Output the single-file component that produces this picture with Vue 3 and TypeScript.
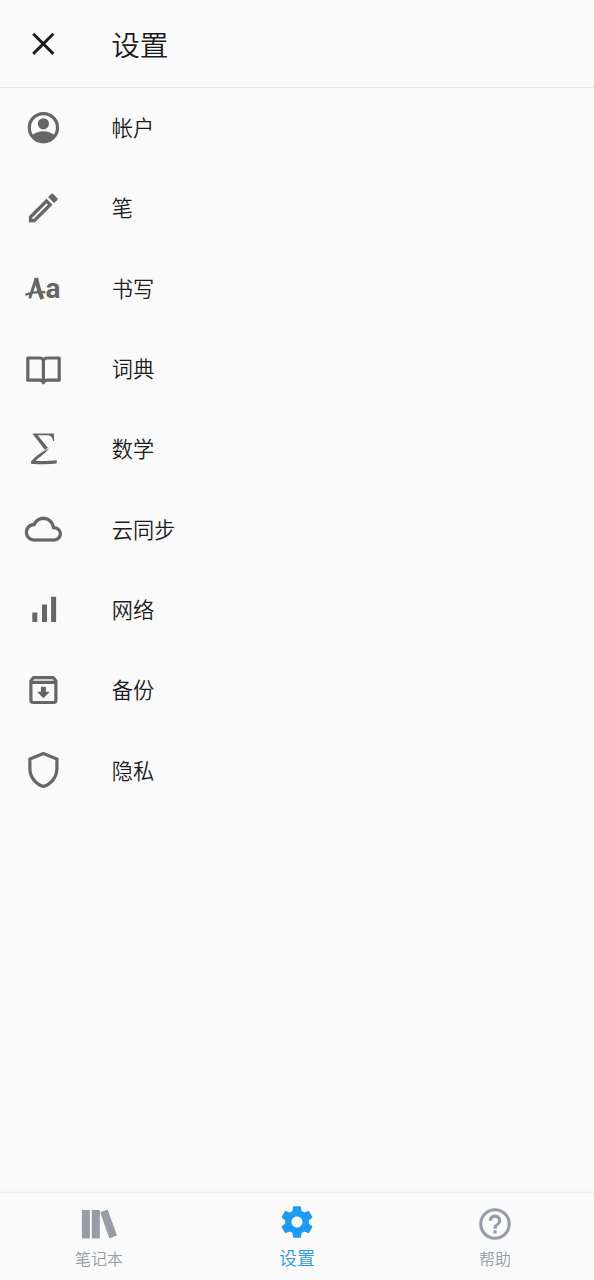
<script setup lang="ts">
import { ref } from 'vue'

type IconName = 'account' | 'pen' | 'writing' | 'book' | 'math' | 'cloud' | 'network' | 'backup' | 'privacy'

interface SettingItem {
  icon: IconName
  label: string
}

const items: SettingItem[] = [
  { icon: 'account', label: '帐户' },
  { icon: 'pen', label: '笔' },
  { icon: 'writing', label: '书写' },
  { icon: 'book', label: '词典' },
  { icon: 'math', label: '数学' },
  { icon: 'cloud', label: '云同步' },
  { icon: 'network', label: '网络' },
  { icon: 'backup', label: '备份' },
  { icon: 'privacy', label: '隐私' },
]

const tabs = [
  { id: 'notebooks', label: '笔记本' },
  { id: 'settings', label: '设置' },
  { id: 'help', label: '帮助' },
]
const active = ref('settings')
</script>

<template>
  <div class="screen">
    <header class="bar">
      <button class="close" aria-label="关闭">
        <svg viewBox="0 0 44 44"><path d="M12.2 11.7 32.4 31.9M32.4 11.7 12.2 31.9" fill="none" stroke="#1c1c1c" stroke-width="2.9" /></svg>
      </button>
      <h1 class="title">设置</h1>
    </header>

    <ul class="list">
      <li v-for="item in items" :key="item.icon" class="row">
        <svg class="icon" viewBox="0 0 44 44">
          <template v-if="item.icon === 'account'">
            <circle cx="22.4" cy="21.7" r="14.1" class="line" />
            <circle cx="22.4" cy="17.8" r="5.6" />
            <path d="M10.9 29.7C13.4 27 17.9 25.3 22.4 25.3S31.4 27 33.9 29.7C31.4 33.7 27.4 36.2 22.4 36.2S13.4 33.7 10.9 29.7Z" />
          </template>
          <path
            v-else-if="item.icon === 'pen'"
            class="heavy"
            transform="translate(3.2 3) scale(1.585)"
            d="M14.06 9.02l.92.92L5.92 19H5v-.92l9.06-9.06M17.66 3c-.25 0-.51.1-.7.29l-1.83 1.83 3.75 3.75 1.83-1.83c.39-.39.39-1.02 0-1.41l-2.34-2.34c-.2-.2-.45-.29-.71-.29zm-3.6 3.19L3 17.25V21h3.75L17.81 9.94l-3.75-3.75z"
          />
          <template v-else-if="item.icon === 'writing'">
            <path class="line leg" d="M9 31.2C11.2 25 13 18.8 15 13.2" />
            <path class="line stem" d="M15.1 12C16.6 19 18.4 26.5 21.4 33" />
            <path class="line cross" d="M5.4 28.4C11.4 26.2 17.4 25.6 23.2 26.2" />
            <text x="24.6" y="32" class="letter">a</text>
          </template>
          <path
            v-else-if="item.icon === 'book'"
            class="line"
            stroke-linejoin="round"
            d="M6.8 11H18.4Q21.4 11 22.4 13.4Q23.4 11 26.4 11H38.2V33.2H25.9Q23.4 33.2 22.4 35.8Q21.4 33.2 18.9 33.2H6.8ZM22.4 13V35.5"
          />
          <path
            v-else-if="item.icon === 'math'"
            transform="translate(.4 0)"
            d="M11 6.4H32.5L32.8 14H31.7C31 10.3 29.5 8.2 25.7 8.2H16.3L26.5 20.8L23.6 23L11 6.4ZM27.8 21.6C24.3 25.8 19.4 29.8 14.1 33.4C20 34.5 29 33.6 35.6 33.2L35.1 36.6C28 37.6 19.5 37.6 9.5 36.7L9.8 34.3C14.5 28.8 20.5 24.5 27.8 21.6Z"
          />
          <path
            v-else-if="item.icon === 'cloud'"
            class="heavy"
            transform="translate(3.9 3.7) scale(1.543)"
            d="M19.35 10.04C18.67 6.59 15.64 4 12 4 9.11 4 6.6 5.64 5.35 8.04 2.34 8.36 0 10.91 0 14c0 3.31 2.69 6 6 6h13c2.76 0 5-2.24 5-5 0-2.64-2.05-4.78-4.65-4.96zM19 18H6c-2.21 0-4-1.79-4-4 0-2.05 1.53-3.76 3.56-3.97l1.07-.11.5-.95C8.08 7.14 9.94 6 12 6c2.62 0 4.88 1.86 5.39 4.43l.3 1.5 1.53.11c1.56.1 2.78 1.41 2.78 2.96 0 1.65-1.35 3-3 3z"
          />
          <path v-else-if="item.icon === 'network'" d="M11.3 25.6h5v9.3h-5zM21 17.6h5v17.3h-5zM30.1 9.8h5v25.1h-5z" />
          <template v-else-if="item.icon === 'backup'">
            <path class="line" stroke-linejoin="round" d="M9.9 13 12.4 9.6H32.4L34.9 13V32.3Q34.9 34.5 32.7 34.5H12.1Q9.9 34.5 9.9 32.3ZM9.9 14.3H34.9" />
            <path d="M19.9 18.8h5v5h3.9L22.4 30.2 16 23.8h3.9z" />
          </template>
          <path v-else class="line" d="M22.4 5.4 8.9 11V20.5C8.9 29 14.4 36 22.4 38.6C30.4 36 35.9 29 35.9 20.5V11Z" />
        </svg>
        <span class="label">{{ item.label }}</span>
      </li>
    </ul>

    <nav class="tabs">
      <button
        v-for="tab in tabs"
        :key="tab.id"
        class="tab"
        :class="{ active: active === tab.id }"
        @click="active = tab.id"
      >
        <svg v-if="tab.id === 'notebooks'" class="tab-icon" viewBox="0 0 38 38">
          <path d="M1.9 5h8v28.4h-8zM11.8 5h8v28.4h-8zM20.2 7.2 27.6 4.5 37 30.5 29.4 33.4z" />
        </svg>
        <svg v-else-if="tab.id === 'settings'" class="tab-icon" viewBox="0 0 24 24">
          <path d="M19.43 12.98c.04-.32.07-.64.07-.98s-.03-.66-.07-.98l2.11-1.65c.19-.15.24-.42.12-.64l-2-3.46c-.12-.22-.39-.3-.61-.22l-2.49 1c-.52-.4-1.08-.73-1.69-.98l-.38-2.65C14.46 2.18 14.25 2 14 2h-4c-.25 0-.46.18-.49.42l-.38 2.65c-.61.25-1.17.59-1.69.98l-2.49-1c-.23-.09-.49 0-.61.22l-2 3.46c-.13.22-.07.49.12.64l2.11 1.65c-.04.32-.07.65-.07.98s.03.66.07.98l-2.11 1.65c-.19.15-.24.42-.12.64l2 3.46c.12.22.39.3.61.22l2.49-1c.52.4 1.08.73 1.69.98l.38 2.65c.03.24.24.42.49.42h4c.25 0 .46-.18.49-.42l.38-2.65c.61-.25 1.17-.59 1.69-.98l2.49 1c.23.09.49 0 .61-.22l2-3.46c.12-.22.07-.49-.12-.64l-2.11-1.65zM12 15.5c-1.93 0-3.5-1.57-3.5-3.5s1.57-3.5 3.5-3.5 3.5 1.57 3.5 3.5-1.57 3.5-3.5 3.5z" />
        </svg>
        <svg v-else class="tab-icon" viewBox="0 0 24 24">
          <path d="M11 18h2v-2h-2v2zm1-16C6.48 2 2 6.48 2 12s4.48 10 10 10 10-4.48 10-10S17.52 2 12 2zm0 18c-4.41 0-8-3.59-8-8s3.59-8 8-8 8 3.59 8 8-3.59 8-8 8zm0-14c-2.21 0-4 1.79-4 4h2c0-1.1.9-2 2-2s2 .9 2 2c0 2-3 1.75-3 5h2c0-2.25 3-2.5 3-5 0-2.21-1.79-4-4-4z" />
        </svg>
        <span class="tab-label">{{ tab.label }}</span>
      </button>
    </nav>
  </div>
</template>

<style>
body {
  margin: 0;
  background: #fafafa;
}
</style>

<style scoped>
.screen {
  display: flex;
  flex-direction: column;
  height: 1280px;
  background: #fafafa;
  color: #1c1c1c;
  font-family: "Noto Sans CJK SC", sans-serif;
  font-weight: 350;
}
button {
  padding: 0;
  border: 0;
  background: none;
  font: inherit;
  color: inherit;
}
.bar {
  display: flex;
  align-items: center;
  box-sizing: border-box;
  height: 88px;
  padding-left: 21px;
  border-bottom: 1px solid #e5e5e5;
}
.close,
.icon {
  flex: none;
  width: 44px;
  height: 44px;
}
.close svg {
  display: block;
}
.title {
  margin: 0 0 0 46.2px;
  font-size: 28.7px;
  line-height: 42px;
  font-weight: inherit;
}
.list {
  flex: 1;
  margin: -0.5px 0 0;
  padding: 0;
  list-style: none;
}
.row {
  display: flex;
  align-items: center;
  height: 80.3px;
  padding-left: 21px;
}
.icon {
  fill: #666;
}
.line {
  fill: none;
  stroke: #666;
  stroke-width: 3.2;
}
.heavy {
  stroke: #666;
  stroke-width: 0.12;
}
.leg {
  stroke-linecap: round;
  stroke-width: 3;
}
.cross {
  stroke-linecap: round;
  stroke-width: 2.6;
}
.stem {
  stroke-width: 4.1;
}
.letter {
  font: 700 28px Roboto, sans-serif;
}
.label {
  margin: -1px 0 0 46.8px;
  font-size: 21.2px;
  line-height: 30px;
}
.tabs {
  display: flex;
  box-sizing: border-box;
  height: 88px;
  border-top: 1px solid #eee;
  box-shadow: 0 -1px 2px rgba(0, 0, 0, 0.02);
}
.tab {
  display: flex;
  flex: 1;
  flex-direction: column;
  align-items: center;
  padding-top: 12.4px;
  color: #959da6;
}
.tab-icon {
  flex: none;
  width: 38px;
  height: 38px;
  fill: currentColor;
}
.tab-label {
  margin-top: 3px;
  font-size: 16px;
  line-height: 24px;
}
.active {
  padding-top: 9.6px;
  color: #1e9bf0;
}
.active .tab-label {
  margin-top: 4.4px;
  font-size: 18px;
  color: #2f9bd8;
}
</style>
